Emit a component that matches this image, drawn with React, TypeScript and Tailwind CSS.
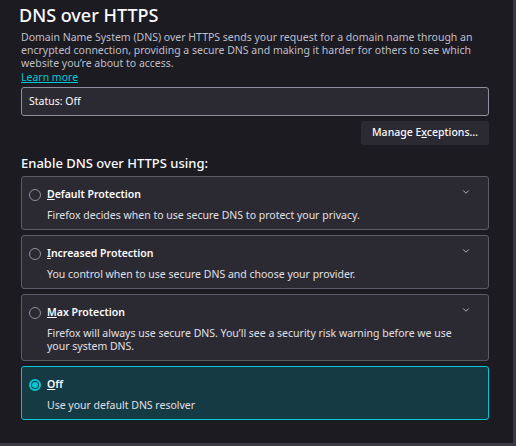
import { ChevronDown } from "lucide-react";

const OPTIONS = [
  { key: "D", rest: "efault Protection", desc: "Firefox decides when to use secure DNS to protect your privacy.", chevron: true },
  { key: "I", rest: "ncreased Protection", desc: "You control when to use secure DNS and choose your provider.", chevron: true },
  { key: "M", rest: "ax Protection", desc: "Firefox will always use secure DNS. You’ll see a security risk warning before we use your system DNS.", chevron: true },
  { key: "O", rest: "ff", desc: "Use your default DNS resolver", chevron: false, selected: true },
];

export default function App() {
  return (
    <div
      className="w-[516px] h-[446px] bg-[#1c1b22] text-[#fbfbfe] overflow-hidden border-r-[3px] border-b-[3px] border-[#3a3944]"
      style={{ fontFamily: '"Noto Sans", sans-serif' }}
    >
      <div className="pl-[21px] pr-[24px]">
        <h1 className="text-[18px] leading-[22px] pt-[4px] -ml-[2px] font-medium">DNS over HTTPS</h1>
        <p className="mt-[5px] text-[10.5px] leading-[13px] text-[#bfbfc9] pr-[6px]">
          Domain Name System (DNS) over HTTPS sends your request for a domain name through an encrypted connection, providing a secure DNS and making it harder for others to see which website you’re about to access.
        </p>
        <a className="block text-[10.5px] leading-[14px] text-[#00c8d7] underline">Learn more</a>
        <div className="mt-[3px] h-[29px] flex items-center px-[7px] text-[10.5px] border border-[#8f8f9d] rounded-[3px] bg-[#2b2a33]">
          Status: Off
        </div>
        <div className="flex justify-end mt-[5px]">
          <button className="h-[24px] px-[11px] rounded-[3px] bg-[#2b2a33] text-[10.5px] font-medium">
            Manage E<span className="underline">x</span>ceptions…
          </button>
        </div>
        <h2 className="mt-[10px] text-[13px] leading-[16px] font-medium">Enable DNS over HTTPS using:</h2>
        <div className="mt-[5px] flex flex-col gap-[5px]">
          {OPTIONS.map((o) => (
            <div
              key={o.key}
              className={`rounded-[3px] border px-[7px] pt-[11px] pb-[7px] ${o.selected ? "bg-[#153a43] border-[#00c8d7]" : "bg-[#2b2a33] border-[#5b5b66]"}`}
            >
              <div className="flex items-center gap-[6px] h-[14px]">
                {o.selected ? (
                  <span className="w-[12px] h-[12px] rounded-full border-2 border-[#00c8d7] flex items-center justify-center">
                    <span className="w-[6px] h-[6px] rounded-full bg-[#00c8d7]" />
                  </span>
                ) : (
                  <span className="w-[12px] h-[12px] rounded-full border border-[#8f8f9d]" />
                )}
                <span className="text-[10.5px] font-semibold flex-1">
                  <span className="underline">{o.key}</span>
                  {o.rest}
                </span>
                {o.chevron && <ChevronDown className="w-[10px] h-[10px] mr-[10px] -mt-[6px] text-[#cfcfd8]" />}
              </div>
              <p className="mt-[7px] ml-[18px] text-[10.5px] leading-[13px] text-[#e0e0e6] pr-[14px]">{o.desc}</p>
            </div>
          ))}
        </div>
      </div>
    </div>
  );
}
